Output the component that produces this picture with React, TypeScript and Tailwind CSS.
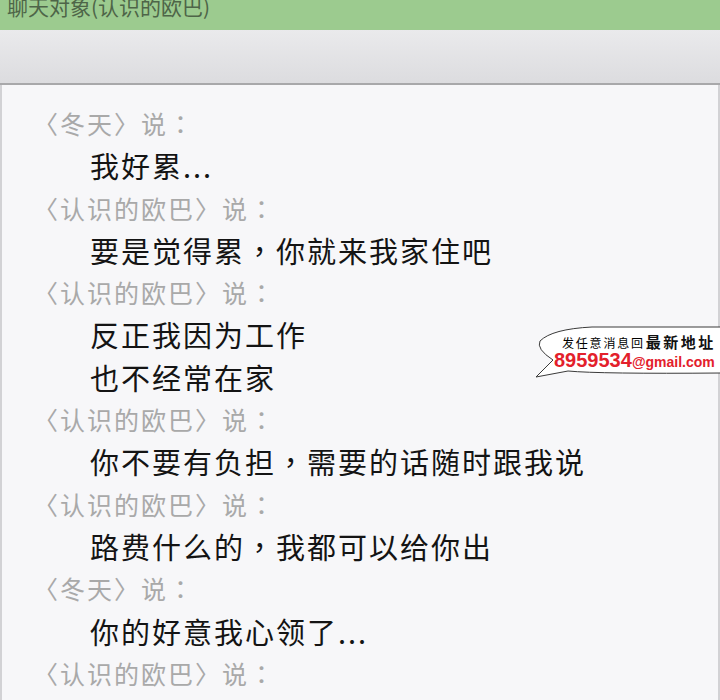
import React from "react";

type Line = { who: string; text: string[] };

const lines: Line[] = [
  { who: "〈冬天〉说：", text: ["我好累..."] },
  { who: "〈认识的欧巴〉说：", text: ["要是觉得累，你就来我家住吧"] },
  { who: "〈认识的欧巴〉说：", text: ["反正我因为工作", "也不经常在家"] },
  { who: "〈认识的欧巴〉说：", text: ["你不要有负担，需要的话随时跟我说"] },
  { who: "〈认识的欧巴〉说：", text: ["路费什么的，我都可以给你出"] },
  { who: "〈冬天〉说：", text: ["你的好意我心领了..."] },
  { who: "〈认识的欧巴〉说：", text: ["放心吧"] },
];

const Bubble = () => (
  <div className="absolute left-[530px] top-[322px] w-[190px] h-[60px]">
    <svg width="190" height="60" viewBox="0 0 190 60" className="absolute inset-0">
      <path
        d="M192 5 L62 5 Q22 7 10 19 Q6 27 23 38 L6 55 L38 49 Q70 52 192 51"
        fill="#ffffff"
        stroke="#3a3a3a"
        strokeWidth="1"
      />
    </svg>
    <div className="absolute left-[32px] top-[12px] flex items-end">
      <span className="text-[12px] leading-none tracking-[1.8px] text-black font-['Noto_Sans_CJK_SC',serif]">
        发任意消息回
      </span>
      <span className="ml-[1px] text-[15px] leading-none font-bold tracking-[2.5px] text-[#111] font-['Noto_Sans_CJK_SC',serif]">
        最新地址
      </span>
    </div>
    <div className="absolute left-[24px] top-[30px] flex items-baseline font-['Liberation_Sans',Arial,sans-serif] font-bold text-[#e3202b] leading-[16px]">
      <span className="text-[20px]">8959534</span>
      <span className="text-[14px]">@gmail.com</span>
    </div>
  </div>
);

export default function App() {
  return (
    <div className="relative w-[720px] h-[700px] overflow-hidden bg-[#f7f7f9] font-['Noto_Sans_CJK_TC',sans-serif]">
      <div className="h-[30px] overflow-hidden bg-[#9ccb8f]">
        <p className="pl-[7px] -mt-[7px] text-[21px] leading-[26px] text-[#4e6548] font-['Noto_Sans_CJK_SC',sans-serif]">
          聊天对象(认识的欧巴)
        </p>
      </div>
      <div className="h-[55px] bg-linear-to-b from-[#eaeaec] to-[#dcdcdf] border-b-2 border-[#a8a8aa]" />
      <div className="h-[615px] border-l-2 border-r-2 border-[#d2d2d5] pt-[17px]">
        {lines.map((l, i) => (
          <div key={i}>
            <div className="pl-[31px] text-[25px] leading-[42.3px] tracking-[2px] text-[#a9a9a9]">
              {l.who}
            </div>
            {l.text.map((t, j) => (
              <div key={j} className="pl-[88px] text-[29px] leading-[42.3px] tracking-[2px] text-[#141414]">
                {t}
              </div>
            ))}
          </div>
        ))}
      </div>
      <Bubble />
    </div>
  );
}
